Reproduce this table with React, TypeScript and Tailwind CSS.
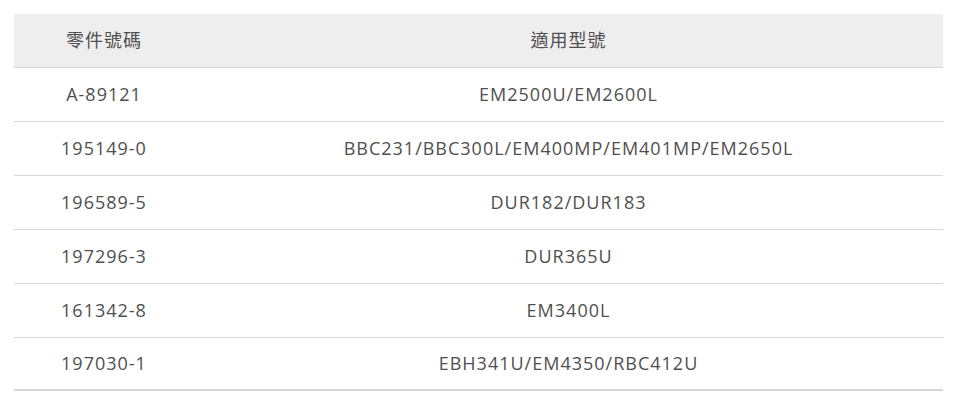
const rows = [
  ["A-89121", "EM2500U/EM2600L"],
  ["195149-0", "BBC231/BBC300L/EM400MP/EM401MP/EM2650L"],
  ["196589-5", "DUR182/DUR183"],
  ["197296-3", "DUR365U"],
  ["161342-8", "EM3400L"],
  ["197030-1", "EBH341U/EM4350/RBC412U"],
];

export default function App() {
  return (
    <div
      className="bg-white w-[960px] h-[407px] pt-[14px] pl-[14px] text-[#4f4f4f]"
      style={{ fontFamily: '"Open Sans", "Noto Sans CJK TC", sans-serif' }}
    >
      <table className="w-[929px] border-collapse text-[18px] tracking-[1px]">
        <thead>
          <tr className="bg-[#eeeeee] h-[53px] border-b border-[#d6d6d6]">
            <th className="w-[180px] font-normal text-center">零件號碼</th>
            <th className="font-normal text-center">適用型號</th>
          </tr>
        </thead>
        <tbody>
          {rows.map(([part, model], i) => (
            <tr
              key={part}
              className={
                i === rows.length - 1
                  ? "h-[53px] border-b-2 border-[#d6d6d6]"
                  : "h-[54px] border-b border-[#d6d6d6]"
              }
            >
              <td className="text-center">{part}</td>
              <td className="text-center">{model}</td>
            </tr>
          ))}
        </tbody>
      </table>
    </div>
  );
}
